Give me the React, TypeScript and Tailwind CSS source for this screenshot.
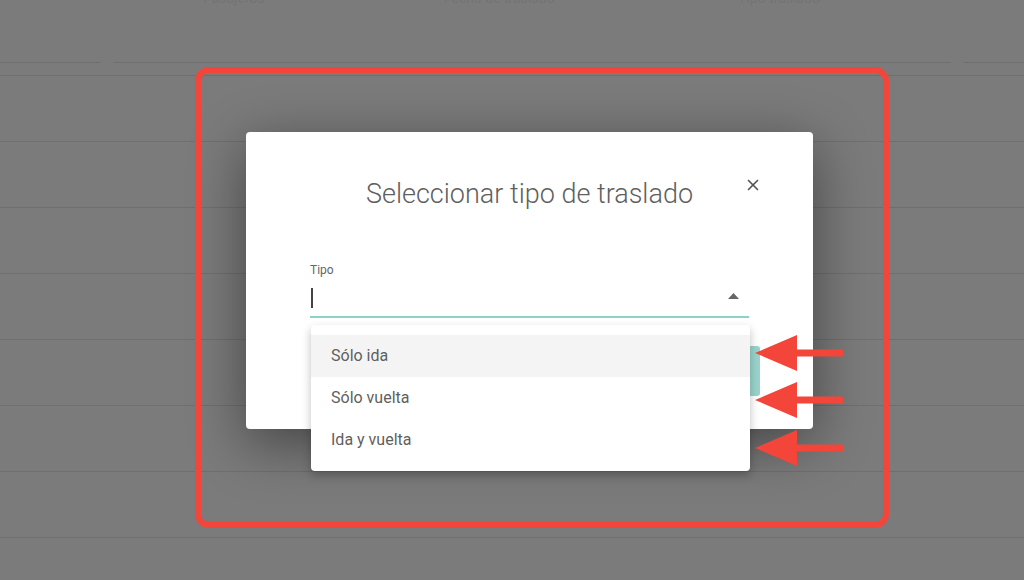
import { X } from "lucide-react";

const options = ["Sólo ida", "Sólo vuelta", "Ida y vuelta"];

function BackgroundTable() {
  return (
    <div className="flex flex-col">
      {/* header row, mostly scrolled off the top */}
      <div className="flex h-[63px] items-start">
        <div className="flex h-[63px] w-[101px] border-b border-[#6f6f6f]" />
        <div className="ml-[13px] flex h-[63px] flex-1 border-b border-[#6f6f6f]">
          <span className="-mt-[9px] ml-[89px] w-[84px] text-[14px] leading-[14px] text-[#747474]">Pasajeros</span>
          <span className="-mt-[9px] ml-[157px] w-[176px] text-[14px] leading-[14px] text-[#747474]">Fecha de traslado</span>
          <span className="-mt-[9px] ml-[118px] w-[138px] text-[14px] leading-[14px] text-[#747474]">Tipo traslado</span>
        </div>
        <div className="ml-[12px] h-[63px] w-[61px] border-b border-[#6f6f6f]" />
      </div>
      <div className="h-[13px] border-b border-[#6f6f6f]" />
      {Array.from({ length: 7 }).map((_, i) => (
        <div key={i} className="h-[66px] border-b border-[#6f6f6f]" />
      ))}
    </div>
  );
}

export default function App() {
  return (
    <div className="relative h-[580px] w-[1024px] overflow-hidden bg-[#7b7b7b] font-['Roboto',sans-serif]">
      <BackgroundTable />

      {/* modal */}
      <div className="absolute left-[246px] top-[132px] flex h-[297px] w-[567px] flex-col rounded-[4px] bg-white px-[64px] shadow-[0_14px_56px_rgba(0,0,0,0.45)]">
        <div className="relative mt-[45px] flex justify-center">
          <h2 className="text-[27px] font-light leading-[35px] text-[#5f5f5f]">Seleccionar tipo de traslado</h2>
          <button className="absolute right-[-13px] top-[-1px] text-[#555]">
            <X size={18} strokeWidth={2.2} />
          </button>
        </div>
        <div className="mt-[51px] flex flex-col">
          <label className="text-[12px] leading-[14px] text-[#666]">Tipo</label>
          <div className="flex h-[41px] items-center justify-between border-b-2 border-b-[#8fd0c8] pr-[10px] pt-[2px]">
            <span className="ml-[1px] h-[20px] w-[2px] bg-[#444]" />
            <svg width="11" height="6" viewBox="0 0 11 6" className="-mt-[4px]">
              <path d="M0 6 L5.5 0 L11 6 Z" fill="#666" />
            </svg>
          </div>
        </div>
        <div className="mt-[28px] flex justify-end">
          <button className="-mr-[11px] h-[50px] w-[120px] rounded-[3px] bg-[#9ad3cc] text-sm text-white">ACEPTAR</button>
        </div>
      </div>

      {/* open select menu */}
      <div className="absolute left-[311px] top-[325px] w-[439px] rounded-[4px] bg-white py-[10px] shadow-[0_4px_10px_rgba(0,0,0,0.25)]">
        {options.map((o, i) => (
          <div
            key={o}
            className={`flex h-[42px] items-center px-[20px] text-[16px] text-[#5f5f5f] ${i === 0 ? "bg-[#f4f4f4]" : ""}`}
          >
            {o}
          </div>
        ))}
      </div>

      {/* annotation frame */}
      <div className="absolute left-[195px] top-[67px] h-[461px] w-[694px] rounded-[14px] border-[6px] border-[#f4453b]" />

      {/* annotation arrows */}
      <svg className="absolute left-[750px] top-[330px]" width="100" height="145" viewBox="0 0 100 145">
        {[23, 70, 118].map((y) => (
          <g key={y} fill="#f4453b">
            <polygon points={`5,${y} 47,${y - 18} 47,${y + 18}`} />
            <rect x="45" y={y - 3.5} width="48" height="7" />
          </g>
        ))}
      </svg>
    </div>
  );
}
